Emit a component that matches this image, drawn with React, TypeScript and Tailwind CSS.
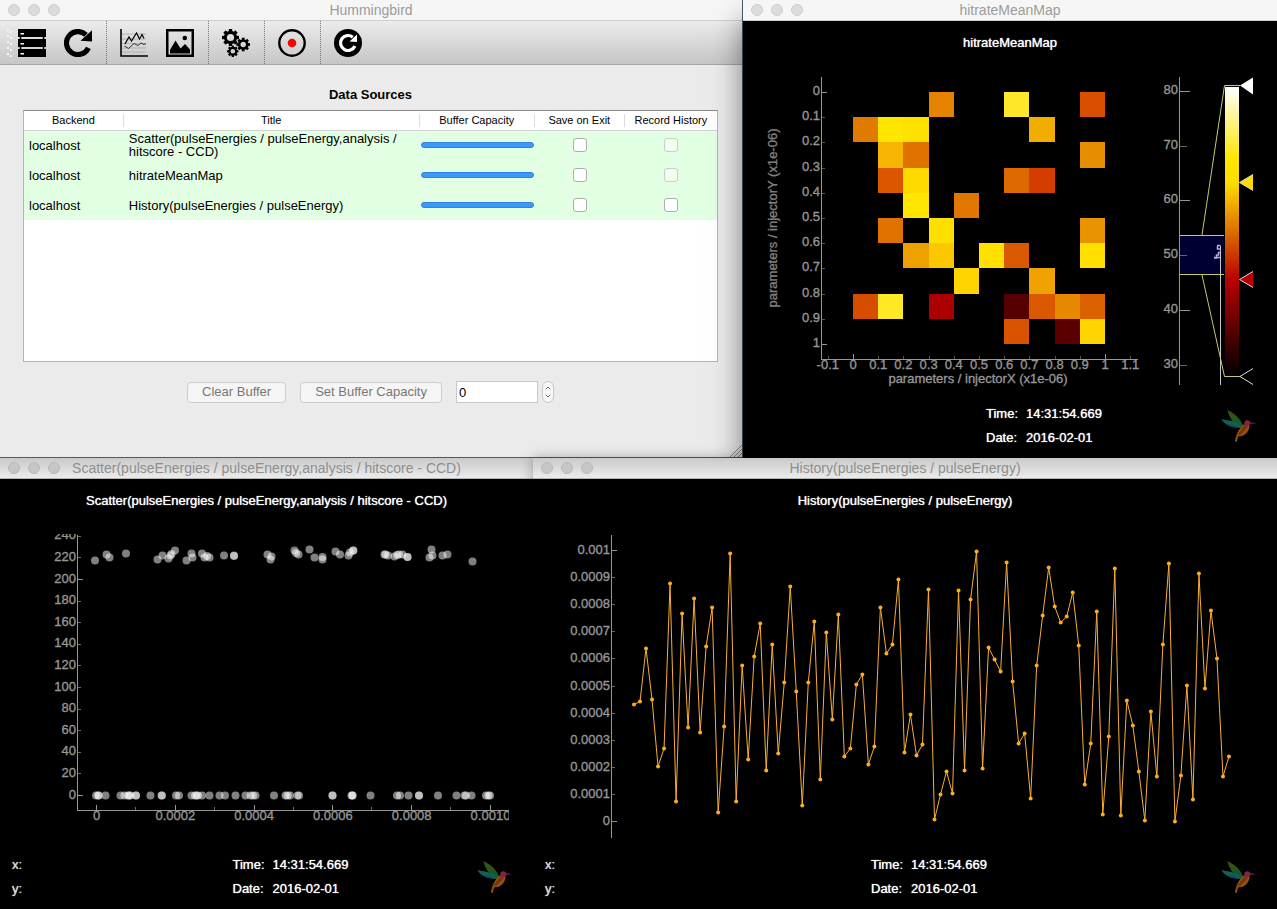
import React, { useState } from 'react';
import clsx from 'clsx';
import { ChevronDown, ChevronUp } from 'lucide-react';

const AXIS = '#969696';

const sources = [
  { backend: 'localhost', title: 'Scatter(pulseEnergies / pulseEnergy,analysis / hitscore - CCD)', history: false },
  { backend: 'localhost', title: 'hitrateMeanMap', history: false },
  { backend: 'localhost', title: 'History(pulseEnergies / pulseEnergy)', history: true },
];

// [row, column, colour]
const heatCells: [number, number, string][] = [
  [0, 3, '#e58300'], [0, 6, '#ffe829'], [0, 9, '#d74e00'],
  [1, 0, '#e17b00'], [1, 1, '#ffe600'], [1, 2, '#ffe100'], [1, 7, '#f2ae00'],
  [2, 1, '#f7b400'], [2, 2, '#e07200'], [2, 9, '#e78e00'],
  [3, 1, '#da5700'], [3, 2, '#ffda00'], [3, 6, '#de6900'], [3, 7, '#d33e00'],
  [4, 2, '#ffe600'], [4, 4, '#e17700'],
  [5, 1, '#e07300'], [5, 3, '#ffdf00'], [5, 9, '#e89200'],
  [6, 2, '#eea000'], [6, 3, '#fbc700'], [6, 5, '#ffe000'], [6, 6, '#da5800'], [6, 9, '#ffe000'],
  [7, 4, '#ffd500'], [7, 7, '#efa200'],
  [8, 0, '#d64d00'], [8, 1, '#ffe824'], [8, 3, '#ac0000'], [8, 6, '#550000'], [8, 7, '#da5800'], [8, 8, '#e68800'], [8, 9, '#dc6100'],
  [9, 6, '#d85200'], [9, 8, '#5b0000'], [9, 9, '#ffd500'],
];

// [x, y] of the hits, in plot units
const hits: [number, number][] = [
  [95, 37.5], [106.5, 31.5], [109.5, 34.5], [126, 30.5], [157.5, 36.5], [162.5, 32.5], [168.5, 35.5], [170.5, 32.5],
  [171.5, 31], [175, 27.5], [186.5, 37.5], [191.5, 30.5], [192.5, 34.5], [202, 30.5], [204.5, 34.5], [207, 33],
  [209.5, 34.5], [224, 32.5], [234, 33], [234, 32.5], [267.5, 31.5], [271.5, 33.5], [270.5, 36.5], [294.5, 27.5],
  [296, 30], [298.5, 31.5], [309.5, 26.5], [314.5, 34.5], [322.5, 34], [322.5, 36.5], [335.5, 28.5], [340, 31.5],
  [348.5, 32.5], [350, 29.5], [353, 27.5], [353.5, 27.5], [384.5, 31.5], [385.5, 31.5], [388, 32.5], [394.5, 33.5],
  [397, 32], [399, 31.5], [402.5, 31.5], [407.5, 34], [407.5, 34], [431.5, 26.5], [432.5, 32.5], [429.5, 34.5],
  [442.5, 32.5], [447.5, 31.5], [472.5, 38.5],
];

const misses = [
  96, 98.5, 98.5, 105.5, 120.5, 124.5, 128, 129, 130.5, 136, 136, 150.5, 161.5, 162, 176, 179, 191.5, 195, 196.5, 198,
  202, 209.5, 219.5, 225, 235.5, 245.5, 250.5, 253, 255.5, 274, 285.5, 287.5, 290, 297.5, 299, 332.5, 332.5, 351.5,
  352.5, 352.5, 370.5, 397, 400, 408.5, 419, 419, 438, 456.5, 464.5, 466, 471.5, 486, 488.5, 490,
];

const pulses = [
  117, 120, 173, 122, 55, 73, 238, 20, 208, 94, 223, 89, 175, 214, 9, 95, 268, 20, 156, 62, 165, 198, 51, 177, 68,
  139, 235, 130, 16, 139, 200, 42, 189, 102, 207, 65, 73, 137, 147, 57, 75, 214, 168, 177, 242, 69, 107, 66, 77, 232,
  2, 27, 50, 28, 231, 51, 222, 270, 53, 174, 162, 150, 259, 140, 78, 88, 23, 156, 206, 254, 215, 199, 205, 229, 176,
  37, 78, 210, 7, 85, 253, 6, 121, 96, 50, 1, 110, 45, 177, 258, 0, 46, 136, 22, 248, 133, 211, 163, 45, 65,
];

/* ---------- icons ---------- */

const Icon = ({ children }: { children: React.ReactNode }) => (
  <svg viewBox="0 0 28 28" className="size-7" fill="none" aria-hidden="true">
    {children}
  </svg>
);

const ServerIcon = () => (
  <Icon>
    {[0, 10, 20].map((y) => (
      <g key={y}>
        <rect x="0" y={y} width="28" height="8" fill="#000" />
        <rect x="2.5" y={y + 4} width="3.5" height="1.5" fill="#fff" />
      </g>
    ))}
    <path d="M2.5 8v2M25.5 8v2M2.5 18v2M25.5 18v2" stroke="#000" strokeWidth="1.5" />
  </Icon>
);

const RefreshIcon = () => (
  <Icon>
    <path d="M22 5.8A11.5 11.5 0 1 0 24.4 18.9" stroke="#000" strokeWidth="5.2" />
    <path d="M28 1.2v11.3l-11.5-.8z" fill="#000" />
  </Icon>
);

const PlotIcon = () => (
  <Icon>
    <path d="M2 5h24M2 10h24M2 14.5h24M2 19h24M2 23h24" stroke="#aaa" strokeWidth=".8" />
    <path d="M1 0v27h27" stroke="#000" strokeWidth="1.6" />
    <path d="M5 15l4-7 2.5 4 5-8 3 6 2.5-4.5 2 4" stroke="#000" strokeWidth="1.2" />
    <path d="M4.5 17l4 2.5 5.5-5 4 2 3-2.5 3 1.5 2-1" stroke="#222" strokeWidth=".9" />
  </Icon>
);

const PictureIcon = () => (
  <Icon>
    <rect x="1.25" y="1.25" width="25.5" height="25.5" stroke="#000" strokeWidth="2.5" />
    <circle cx="18.8" cy="9" r="2.3" fill="#000" />
    <path d="M4 24.5V21L9.5 11.5l5 8 4.5-4.500 5 5.500V24.5z" fill="#000" />
  </Icon>
);

const Gear = ({ cx, cy, r, hole }: { cx: number; cy: number; r: number; hole: number }) => (
  <g transform={`translate(${cx} ${cy})`}>
    <circle r={(r * 0.78 + hole) / 2} stroke="#000" strokeWidth={r * 0.78 - hole} />
    {Array.from({ length: 8 }, (_, i) => (
      <rect key={i} x={-r * 0.2} y={-r} width={r * 0.4} height={r * 0.35} fill="#000" transform={`rotate(${i * 45})`} />
    ))}
  </g>
);

const GearsIcon = () => (
  <Icon>
    <Gear cx={8.5} cy={8.5} r={8.5} hole={3.6} />
    <Gear cx={21.2} cy={15.5} r={6.8} hole={2.8} />
    <Gear cx={10.8} cy={22.3} r={5.7} hole={2.3} />
  </Icon>
);

const RecordIcon = () => (
  <Icon>
    <circle cx="14" cy="14" r="12.7" stroke="#000" strokeWidth="2.4" />
    <circle cx="14" cy="14" r="4.3" fill="#f00" />
  </Icon>
);

const ReloadCircleIcon = () => (
  <Icon>
    <circle cx="14" cy="14" r="14" fill="#000" />
    <path d="M18.8 8.200A7.500 7.500 0 1 0 20.9 17" stroke="#fff" strokeWidth="3.2" />
    <path d="M23 5.5v7.500l-7.500-.5z" fill="#fff" />
  </Icon>
);

const Hummingbird = () => (
  <svg viewBox="0 0 114 102" className="w-9 opacity-85" aria-hidden="true">
    <path d="M20 0C36 8 54 20 60 32L70 50 60 56C40 44 26 24 20 0z" fill="#3d6416" />
    <path d="M38 24L60 32 70 50 60 56C50 48 42 38 38 24z" fill="#176b34" />
    <path d="M0 29C22 32 44 34 64 50L58 56C34 56 14 48 0 29z" fill="#127166" />
    <path d="M20 44C34 46 46 48 58 56L40 54z" fill="#1a4f7c" />
    <path d="M72 46L90 48C92 62 80 78 66 82L54 84 50 102 44 98 50 76C56 66 60 54 72 46z" fill="#ad620c" />
    <path d="M72 50L86 52 62 78 52 80z" fill="#8d3d14" />
    <path d="M74 46C72 36 80 30 88 34L94 39 90 50 78 54z" fill="#a22a52" />
    <path d="M91 38L114 42 92 44z" fill="#6b2c43" />
  </svg>
);

/* ---------- window chrome ---------- */

const TitleBar = ({ title, shaded }: { title: string; shaded?: boolean }) => (
  <header
    className={clsx(
      'grid h-[21px] grid-cols-[60px_1fr_60px] items-center border-b px-2',
      shaded ? 'border-[#b4b4b4] bg-linear-to-b from-[#cacaca] to-[#ebebeb]' : 'border-[#cfcfcf] bg-[#f6f6f6]',
    )}
  >
    <div className="flex gap-2">
      {[0, 1, 2].map((i) => (
        <span key={i} className={clsx('size-3 rounded-full border', shaded ? 'border-[#b9b9b9] bg-[#c6c6c6]' : 'border-[#cecece] bg-[#dcdcdc]')} />
      ))}
    </div>
    <h1 className={clsx('truncate text-center text-sm leading-5', shaded ? 'text-[#8e8e8e]' : 'text-[#9c9c9c]')}>{title}</h1>
  </header>
);

type PlotWindowProps = {
  title: string;
  cursor?: boolean;
  shaded?: boolean;
  className?: string;
  children: React.ReactNode;
};

const PlotWindow = ({ title, cursor, shaded, className, children }: PlotWindowProps) => (
  <section className={clsx('relative flex flex-col bg-black text-[13px] text-white', className)}>
    <TitleBar title={title} shaded={shaded} />
    <h2 className="flex h-11 items-center justify-center [text-shadow:0_0_1px_#fff]">{title}</h2>
    {children}
    <footer className="mt-auto flex items-center pb-2 leading-6">
      {cursor ? (
        <div className="w-[104px] pl-3 text-[#dcdcdc] [text-shadow:0_0_1px_#dcdcdc]">
          <p>x:</p>
          <p>y:</p>
        </div>
      ) : (
        <div className="w-[124px]" />
      )}
      <dl className="flex flex-1 flex-col items-center [text-shadow:0_0_1px_#fff]">
        <div className="grid grid-cols-[40px_76px]">
          <dt>Time:</dt>
          <dd>14:31:54.669</dd>
          <dt>Date:</dt>
          <dd>2016-02-01</dd>
        </div>
      </dl>
      <div className="w-14">
        <Hummingbird />
      </div>
    </footer>
  </section>
);

const Plot = ({ viewBox, children }: { viewBox: string; children: React.ReactNode }) => (
  <svg viewBox={viewBox} className="w-full [&_text]:stroke-[#969696] [&_text]:[stroke-width:0.35]" fill={AXIS} fontSize="13">
    {children}
  </svg>
);

const Line = ({ x1, y1, x2, y2, color = AXIS }: { x1: number; y1: number; x2: number; y2: number; color?: string }) => (
  <line x1={x1} y1={y1} x2={x2} y2={y2} stroke={color} shapeRendering="crispEdges" />
);

/* ---------- plots ---------- */

const MeanMapPlot = () => {
  const x = (v: number) => 110 + v * 25.2;
  const y = (v: number) => 27 + v * 25.2;
  const steps = [0, 1, 2, 3, 4, 5, 6, 7, 8, 9, 10];
  const name = (v: number) => String(v / 10);

  return (
    <Plot viewBox="0 0 534 337">
      {heatCells.map(([row, col, fill]) => (
        <rect key={`${row}-${col}`} x={x(col)} y={y(row)} width="25.2" height="25.2" fill={fill} shapeRendering="crispEdges" />
      ))}

      <Line x1={78.5} y1={12} x2={78.5} y2={294} />
      <Line x1={78} y1={294.5} x2={395} y2={294.5} />
      {steps.map((v) => (
        <g key={v}>
          <Line x1={79} y1={y(v) + 0.5} x2={v % 10 ? 82 : 84} y2={y(v) + 0.5} color={v % 10 ? '#555' : AXIS} />
          <text x="77" y={y(v) + 3} textAnchor="end">{name(v)}</text>
        </g>
      ))}
      {[-1, ...steps, 11].map((v) => (
        <g key={v}>
          <Line x1={x(v) + 0.5} y1={v % 10 ? 291 : 289} x2={x(v) + 0.5} y2={294} color={v % 10 ? '#555' : AXIS} />
          <text x={x(v)} y="304" textAnchor="middle">{name(v)}</text>
        </g>
      ))}
      <text x="235" y="318" textAnchor="middle">parameters / injectorX (x1e-06)</text>
      <g opacity=".85">
        <text transform="translate(34 153) rotate(-90)" textAnchor="middle">parameters / injectorY (x1e-06)</text>
      </g>

      {/* colour bar with histogram */}
      <defs>
        <linearGradient id="heat" x1="0" y1="0" x2="0" y2="1">
          <stop offset="0" stopColor="#fff" />
          <stop offset=".25" stopColor="#ffe600" />
          <stop offset=".333" stopColor="#ffdc00" />
          <stop offset=".667" stopColor="#b90000" />
          <stop offset="1" stopColor="#000" />
        </linearGradient>
      </defs>
      <rect x="437" y="170" width="44" height="39" fill="#000032" />
      <Line x1={436.5} y1={12} x2={436.5} y2={320} />
      {[80, 70, 60, 50, 40, 30].map((v, i) => (
        <g key={v}>
          <Line x1={437} y1={26.5 + i * 54.7} x2={i % 2 ? 444 : 447} y2={26.5 + i * 54.7} color={i % 2 ? '#666' : AXIS} />
          <text x="435" y={29 + i * 54.7} textAnchor="end">{v}</text>
        </g>
      ))}
      <Line x1={477.5} y1={181} x2={477.5} y2={320} color="#c8c8c8" />
      <path d="M474 180.5h3.5M474.5 181v3h3M475.5 187v3h-2v3h-2.5M477 187.5h-2M477 192.5h-6" fill="none" stroke="#b4afe6" strokeWidth="1.5" />
      <path d="M437 170.5h44M437 209.5h44M497 20.5h-15.5L459 170M459 210l22.5 101.5H497" fill="none" stroke="#c8c86e" />
      <rect x="482" y="22" width="14" height="289" fill="url(#heat)" />
      <path d="M497 20.5l13-8v17z" fill="#fff" />
      <path d="M496.5 117.5l13.5-8v16z" fill="#ffdc00" />
      <path d="M510 206.5l-13.5 8 13.5 8z" fill="#b90000" />
      <path d="M510 109.5l-13.5 8 13.5 8M510 206.5l-13.5 8 13.5 8M510 303.5l-13 8 13 8" fill="none" stroke="#e6dcdc" />
    </Plot>
  );
};

const ScatterPlot = () => {
  const y = (v: number) => 272.5 - v * 1.08;
  const xLabels = ['0', '0.0002', '0.0004', '0.0006', '0.0008', '0.0010'];

  return (
    <Plot viewBox="0 0 533 330">
      <defs>
        <clipPath id="scatter-area">
          <rect x="0" y="11" width="509" height="300" />
        </clipPath>
      </defs>
      <g clipPath="url(#scatter-area)">
        {Array.from({ length: 13 }, (_, i) => i * 20).map((v) => (
          <g key={v}>
            <Line x1={78} y1={y(v)} x2={v % 200 ? 81 : 83} y2={y(v)} color={v % 200 ? '#666' : AXIS} />
            <text x="76" y={y(v) + 3} textAnchor="end">{v}</text>
          </g>
        ))}
        {xLabels.map((label, i) => (
          <g key={label}>
            <Line x1={96.5 + i * 78.8} y1={282} x2={96.5 + i * 78.8} y2={287} />
            {i < 5 && <Line x1={135.5 + i * 78.8} y1={284} x2={135.5 + i * 78.8} y2={287} color="#666" />}
            <text x={96.5 + i * 78.8} y="297" textAnchor="middle">{label}</text>
          </g>
        ))}
      </g>
      <Line x1={77.5} y1={12} x2={77.5} y2={288} />
      <Line x1={77} y1={287.5} x2={509} y2={287.5} />
      <g fill="#fff" fillOpacity=".5">
        {hits.map(([cx, cy], i) => (
          <circle key={i} cx={cx} cy={cy} r="4" />
        ))}
        {misses.map((cx, i) => (
          <circle key={i} cx={cx} cy="272.5" r="4" />
        ))}
      </g>
    </Plot>
  );
};

const HistoryPlot = () => {
  const points = pulses.map((v, i) => [101 + i * 6.01, 298.5 - v]);

  return (
    <Plot viewBox="0 0 744 330">
      <Line x1={78.5} y1={12} x2={78.5} y2={315} />
      {Array.from({ length: 11 }, (_, i) => (
        <g key={i}>
          <Line x1={79} y1={298.5 - i * 27.1} x2={i % 10 ? 82 : 84} y2={298.5 - i * 27.1} color={i % 10 ? '#666' : AXIS} />
          <text x="77" y={302 - i * 27.1} textAnchor="end">{i === 0 ? '0' : i === 10 ? '0.001' : `0.000${i}`}</text>
        </g>
      ))}
      <polyline points={points.map((p) => p.join(',')).join(' ')} fill="none" stroke="#f9ae36" />
      {points.map(([cx, cy], i) => (
        <circle key={i} cx={cx} cy={cy} r="2" fill="#fbac23" />
      ))}
    </Plot>
  );
};

/* ---------- main window ---------- */

const ToolButton = ({ label, children }: { label: string; children: React.ReactNode }) => (
  <button type="button" aria-label={label} className="flex w-[46px] justify-center">
    {children}
  </button>
);

const Separator = () => (
  <div className="flex w-[10px] justify-center self-stretch">
    <span className="border-l border-dotted border-[#777]" />
  </div>
);

const Toolbar = () => (
  <div className="flex h-11 items-center border-b border-[#a6a6a6] bg-linear-to-b from-[#ececec] to-[#c6c6c6]">
    <svg viewBox="0 0 13 28" className="-mr-1 h-7 w-[13px]" aria-hidden="true">
      {[1, 7, 13, 19, 25].map((y) => (
        <path key={y} d={`M7 ${y}h2M10 ${y + 2}h2`} stroke="#f4f4f4" strokeWidth="2" />
      ))}
    </svg>
    <ToolButton label="Backends"><ServerIcon /></ToolButton>
    <ToolButton label="Reload"><RefreshIcon /></ToolButton>
    <Separator />
    <ToolButton label="Line plot"><PlotIcon /></ToolButton>
    <ToolButton label="Image plot"><PictureIcon /></ToolButton>
    <Separator />
    <ToolButton label="Preferences"><GearsIcon /></ToolButton>
    <Separator />
    <ToolButton label="Record"><RecordIcon /></ToolButton>
    <Separator />
    <ToolButton label="Reset"><ReloadCircleIcon /></ToolButton>
  </div>
);

const Check = ({ label, disabled }: { label: string; disabled?: boolean }) => (
  <input
    type="checkbox"
    aria-label={label}
    disabled={disabled}
    className="mx-auto block size-[14px] appearance-none rounded-[3px] border border-[#adadad] bg-white checked:bg-[#3b99fc] disabled:border-[#c3d2c3] disabled:bg-[#f0fff0]"
  />
);

const headings = ['Backend', 'Title', 'Buffer Capacity', 'Save on Exit', 'Record History'];

const SourceTable = () => (
  <div className="h-[252px] border border-[#b4b4b4] border-t-[#8c8c8c] bg-white">
    <table className="w-full table-fixed border-collapse text-[13px] leading-[13px] text-black">
      <colgroup>
        <col className="w-[14.4%]" />
        <col className="w-[42.7%]" />
        <col className="w-[16.6%]" />
        <col className="w-[13%]" />
        <col />
      </colgroup>
      <thead>
        <tr className="h-[19px] border-b border-[#d2d2d2] text-[11px]">
          {headings.map((h, i) => (
            <th key={h} className="p-0 font-normal">
              <span className={clsx('block', i < headings.length - 1 && 'border-r border-[#dcdcdc]')}>{h}</span>
            </th>
          ))}
        </tr>
      </thead>
      <tbody>
        {sources.map((s) => (
          <tr key={s.title} className="h-[30px] bg-[#e3ffe3]">
            <td className="p-0 pl-[5px]">{s.backend}</td>
            <td className="p-0 pl-[5px]">{s.title}</td>
            <td className="p-0 px-px">
              <div role="progressbar" aria-label="Buffer Capacity" aria-valuenow={100} className="h-1.5 rounded-full border border-[#3182dc] bg-[#3b99fc]" />
            </td>
            <td className="p-0"><Check label="Save on Exit" /></td>
            <td className="p-0"><Check label="Record History" disabled={!s.history} /></td>
          </tr>
        ))}
      </tbody>
    </table>
  </div>
);

const BufferControls = () => {
  const [capacity, setCapacity] = useState(0);
  const button = 'h-[21px] rounded border border-[#cdcdcd] bg-[#f5f5f5] px-3.5 leading-4 text-[#777]';

  return (
    <div className="flex items-center justify-center gap-3.5 text-[13px]">
      <button type="button" className={button}>Clear Buffer</button>
      <button type="button" className={button}>Set Buffer Capacity</button>
      <div className="flex items-center gap-1">
        <input
          type="text"
          inputMode="numeric"
          aria-label="Buffer capacity"
          value={capacity}
          onChange={(e) => setCapacity(Number(e.target.value) || 0)}
          className="h-[22px] w-[82px] border border-[#c8c8c8] bg-white px-0.5 text-black outline-none"
        />
        <div className="flex h-[22px] w-3 flex-col items-center justify-center rounded-md border border-[#c8c8c8] bg-[#f7f7f7] text-[#666]">
          <button type="button" aria-label="Increase" onClick={() => setCapacity(capacity + 1)}><ChevronUp size={8} strokeWidth={3} /></button>
          <button type="button" aria-label="Decrease" onClick={() => setCapacity(Math.max(0, capacity - 1))}><ChevronDown size={8} strokeWidth={3} /></button>
        </div>
      </div>
    </div>
  );
};

const MainWindow = () => (
  <section className="relative z-20 flex flex-col border-r border-b border-[#4a5a6a] bg-[#ebebeb]">
    <TitleBar title="Hummingbird" />
    <Toolbar />
    <div className="flex flex-col pr-6 pl-[23px]">
      <h2 className="mt-5 mb-1.5 text-center text-[13px] leading-[19px] font-bold text-black">Data Sources</h2>
      <SourceTable />
      <div className="mt-[19px]">
        <BufferControls />
      </div>
    </div>
    <svg viewBox="0 0 12 12" className="mt-auto size-3 self-end" aria-hidden="true">
      <path d="M0 12L12 0M4 12l8-8M8 12l4-4" stroke="#8c8c8c" />
    </svg>
  </section>
);

export default function App() {
  return (
    <main className="min-h-screen overflow-hidden bg-black font-['Liberation_Sans',Arial,sans-serif]">
      <div className="grid grid-cols-[743fr_534fr]">
        <MainWindow />
        <PlotWindow title="hitrateMeanMap" className="z-30 shadow-[0_20px_28px_rgba(0,0,0,0.5)]">
          <MeanMapPlot />
        </PlotWindow>
      </div>
      <div className="relative z-40 grid grid-cols-[533fr_744fr]">
        <PlotWindow title="Scatter(pulseEnergies / pulseEnergy,analysis / hitscore - CCD)" cursor shaded>
          <ScatterPlot />
        </PlotWindow>
        <PlotWindow title="History(pulseEnergies / pulseEnergy)" cursor shaded className="shadow-[0_0_12px_rgba(0,0,0,0.3)]">
          <HistoryPlot />
        </PlotWindow>
      </div>
    </main>
  );
}
